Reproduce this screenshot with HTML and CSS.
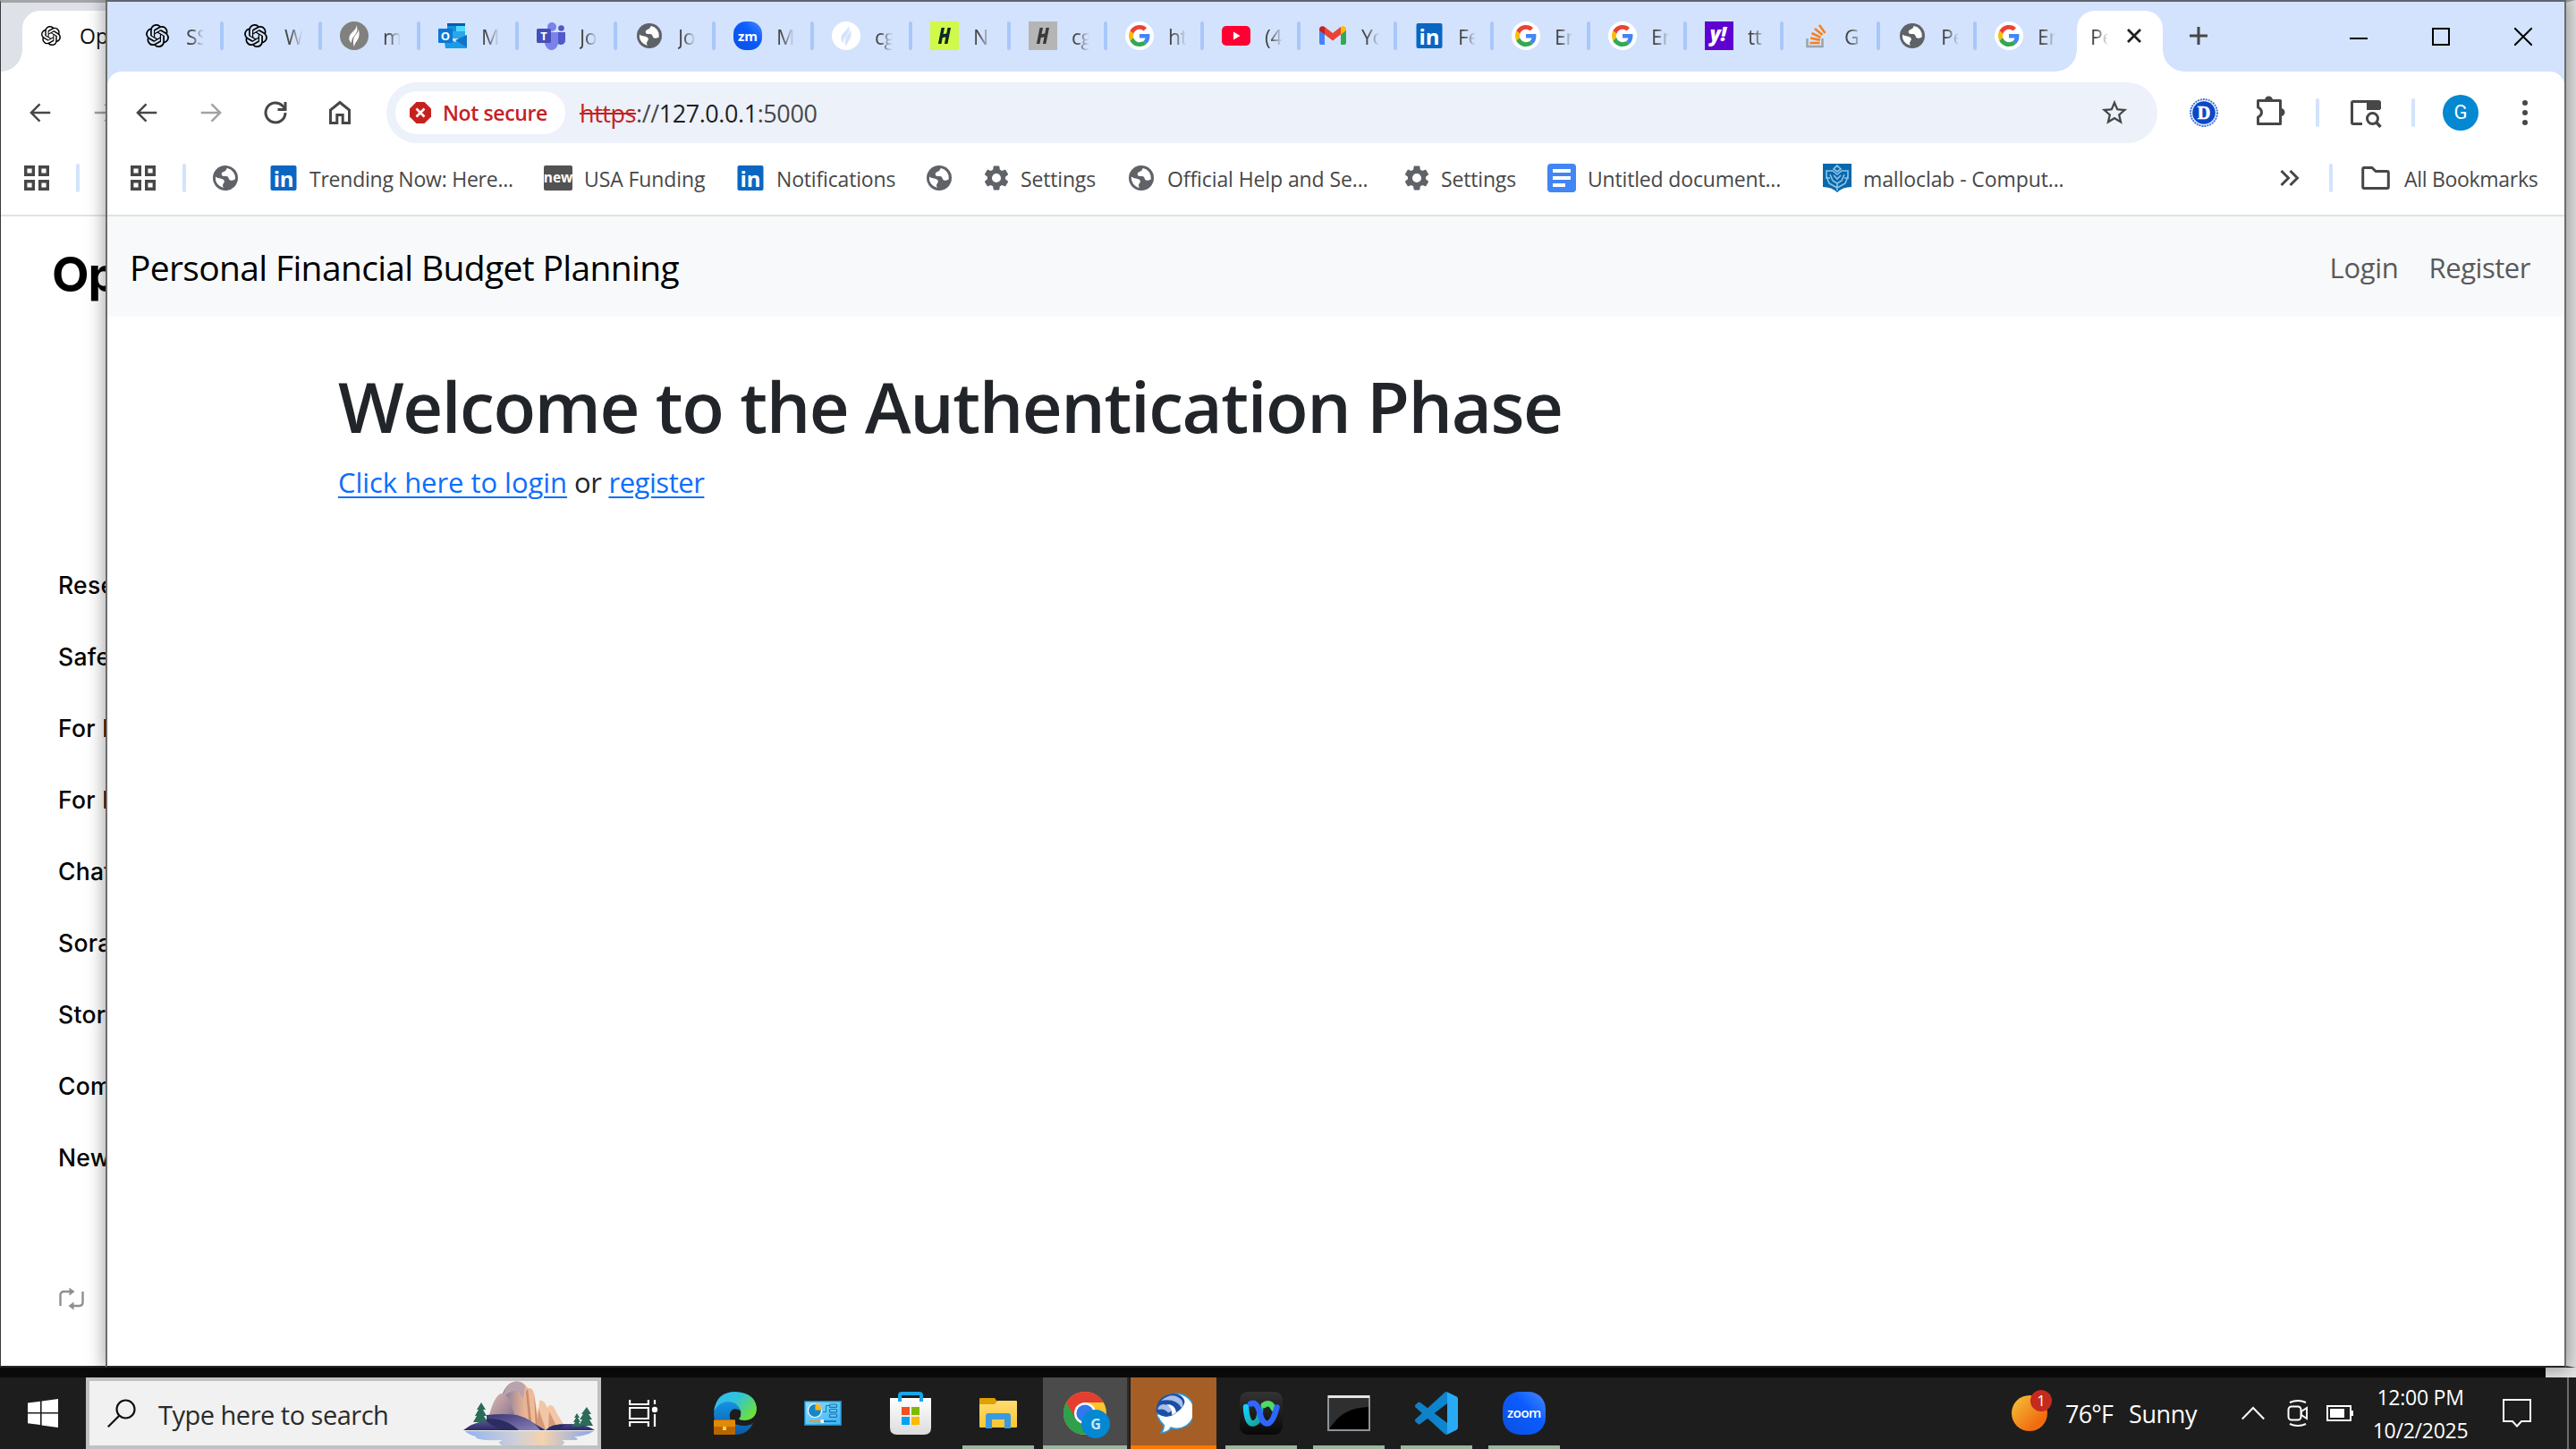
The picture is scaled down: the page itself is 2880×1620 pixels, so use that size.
FILE: index.html
```html
<!DOCTYPE html>
<html lang="en">
<head>
<meta charset="utf-8">
<title>Personal Financial Budget Planning</title>
<link rel="stylesheet" href="styles.css">
</head>
<body>
<svg class="defs" aria-hidden="true">
  <defs>
    <linearGradient id="gZoom" x1="0" y1="1" x2="1" y2="0"><stop offset="0" stop-color="#0b4fe0"/><stop offset=".6" stop-color="#0b5cff"/><stop offset="1" stop-color="#4a8bff"/></linearGradient>
    <linearGradient id="gEdge" x1="0" y1="0" x2="1" y2=".6"><stop offset="0" stop-color="#35b8f5"/><stop offset=".5" stop-color="#2fc3dc"/><stop offset="1" stop-color="#6be03c"/></linearGradient>
    <linearGradient id="gEdge2" x1="0" y1="0" x2="0" y2="1"><stop offset="0" stop-color="#1593e6"/><stop offset="1" stop-color="#0c59a4"/></linearGradient>
    <linearGradient id="gStore" x1="0" y1="0" x2="0" y2="1"><stop offset="0" stop-color="#fff"/><stop offset="1" stop-color="#dcdcdc"/></linearGradient>
    <linearGradient id="gFolder" x1="0" y1="0" x2="0" y2="1"><stop offset="0" stop-color="#ffdc73"/><stop offset="1" stop-color="#fcc42f"/></linearGradient>
    <linearGradient id="gPanel" x1="0" y1="0" x2="1" y2="1"><stop offset="0" stop-color="#8ddcff"/><stop offset="1" stop-color="#38b4f6"/></linearGradient>
    <linearGradient id="gWebex" x1="0" y1="0" x2="0" y2="1"><stop offset="0" stop-color="#333"/><stop offset="1" stop-color="#080808"/></linearGradient>
    <linearGradient id="gW1" x1="0" y1="0" x2="1" y2="1"><stop offset="0" stop-color="#12d0ff"/><stop offset="1" stop-color="#1aa08c"/></linearGradient>
    <linearGradient id="gCode" x1="0" y1="0" x2="1" y2="0"><stop offset="0" stop-color="#0f7fc6"/><stop offset=".74" stop-color="#0d86d0"/><stop offset=".75" stop-color="#29aaf5"/><stop offset="1" stop-color="#29aaf5"/></linearGradient>
    <linearGradient id="gSun" x1="0" y1="0" x2="1" y2="1"><stop offset="0" stop-color="#f4c63a"/><stop offset=".75" stop-color="#f06c10"/></linearGradient>
    <linearGradient id="gRock" x1="0" y1="0" x2="1" y2="0"><stop offset="0" stop-color="#857a98"/><stop offset=".35" stop-color="#8d7f9e"/><stop offset=".7" stop-color="#e8b394"/><stop offset="1" stop-color="#f5c39c"/></linearGradient>
    <linearGradient id="gRock2" x1="0" y1="0" x2="1" y2="1"><stop offset="0" stop-color="#dbbcae"/><stop offset=".5" stop-color="#a88c9b"/><stop offset="1" stop-color="#5c5884"/></linearGradient>
    <linearGradient id="gBase" x1="0" y1="0" x2="0" y2="1"><stop offset="0" stop-color="#6b64a4"/><stop offset="1" stop-color="#2c2b66"/></linearGradient>
    <linearGradient id="gPurple" x1="0" y1="0" x2="1" y2="1"><stop offset="0" stop-color="#38366f"/><stop offset=".45" stop-color="#5d5795"/><stop offset="1" stop-color="#8d83b8"/></linearGradient>
    <linearGradient id="gWater" x1="0" y1="0" x2="1" y2="0"><stop offset="0" stop-color="#8fb4f2"/><stop offset=".4" stop-color="#cfd0d8"/><stop offset=".6" stop-color="#f6d2ad"/><stop offset="1" stop-color="#7fa8f0"/></linearGradient>
  </defs>
</svg>
<svg class="symbols" aria-hidden="true">
  <symbol id="openai" viewBox="0 0 24 24"><path d="M22.2819 9.8211a5.9847 5.9847 0 0 0-.5157-4.9108 6.0462 6.0462 0 0 0-6.5098-2.9A6.0651 6.0651 0 0 0 4.9807 4.1818a5.9847 5.9847 0 0 0-3.9977 2.9 6.0462 6.0462 0 0 0 .7427 7.0966 5.98 5.98 0 0 0 .511 4.9107 6.051 6.051 0 0 0 6.5146 2.9001A5.9847 5.9847 0 0 0 13.2599 24a6.0557 6.0557 0 0 0 5.7718-4.2058 5.9894 5.9894 0 0 0 3.9977-2.9001 6.0557 6.0557 0 0 0-.7475-7.0729zm-9.022 12.6081a4.4755 4.4755 0 0 1-2.8764-1.0408l.1419-.0804 4.7783-2.7582a.7948.7948 0 0 0 .3927-.6813v-6.7369l2.02 1.1686a.071.071 0 0 1 .038.052v5.5826a4.504 4.504 0 0 1-4.4945 4.4944zm-9.6607-4.1254a4.4708 4.4708 0 0 1-.5346-3.0137l.142.0852 4.783 2.7582a.7712.7712 0 0 0 .7806 0l5.8428-3.3685v2.3324a.0804.0804 0 0 1-.0332.0615L9.74 19.9502a4.4992 4.4992 0 0 1-6.1408-1.6464zM2.3408 7.8956a4.485 4.485 0 0 1 2.3655-1.9728V11.6a.7664.7664 0 0 0 .3879.6765l5.8144 3.3543-2.0201 1.1685a.0757.0757 0 0 1-.071 0l-4.8303-2.7865A4.504 4.504 0 0 1 2.3408 7.872zm16.5963 3.8558L13.1038 8.364 15.1192 7.2a.0757.0757 0 0 1 .071 0l4.8303 2.7913a4.4944 4.4944 0 0 1-.6765 8.1042v-5.6772a.79.79 0 0 0-.407-.667zm2.0107-3.0231l-.142-.0852-4.7735-2.7818a.7759.7759 0 0 0-.7854 0L9.409 9.2297V6.8974a.0662.0662 0 0 1 .0284-.0615l4.8303-2.7866a4.4992 4.4992 0 0 1 6.6802 4.66zM8.3065 12.863l-2.02-1.1638a.0804.0804 0 0 1-.038-.0567V6.0742a4.4992 4.4992 0 0 1 7.3757-3.4537l-.142.0805L8.704 5.459a.7948.7948 0 0 0-.3927.6813zm1.0976-2.3654l2.602-1.4998 2.6069 1.4998v2.9994l-2.5974 1.4997-2.6067-1.4997Z"/></symbol>
  <symbol id="flame" viewBox="0 0 32 32"><path d="M18.500 4c1 5-6.500 8-8 13-.8 3 .5 5.500 2.500 7-.6-6 4.600-8 6-13 .6-2.500.5-5-.5-7zM20.500 8.500c.5 5-4 6-5.200 11-.6 3-.3 6.500.7 9 .4-5 4-6.500 5.200-11.500.7-3 .6-6-.7-8.500z"/></symbol>
  <symbol id="outlook" viewBox="0 0 32 32"><path fill="#0a5ba8" d="M10 2h20v4H10z"/><path fill="#1490df" d="M10 5h10v12H10z"/><path fill="#50d9ff" d="M20 5h10v7H20z"/><path fill="#28a8ea" d="M14 11h16v8H14z"/><path fill="#1a9be8" d="M6 16l13 7 13-8v15H8z"/><path fill="#0f74c8" d="M32 15v14L19 21z"/><rect x="0" y="8" width="16" height="16" rx="1" fill="#0a78d4"/><text x="8" y="20.500" text-anchor="middle" class="logo-bold" font-size="13" fill="#fff">O</text></symbol>
  <symbol id="teams" viewBox="0 0 32 32"><circle cx="17" cy="6" r="5" fill="#7b83eb"/><circle cx="27.500" cy="7.500" r="3.300" fill="#5059c9"/><path fill="#5059c9" d="M23 12h9v9a5 5 0 0 1-9 3z"/><path fill="#7b83eb" d="M9 12h15v10a7.500 9 0 0 1-15 2z"/><rect y="8" width="16" height="16" rx="1.500" fill="#464eb8"/><text x="8" y="20.500" text-anchor="middle" class="logo-bold" font-size="13" fill="#fff">T</text></symbol>
  <symbol id="globe" viewBox="0 0 32 32"><circle cx="16" cy="16" r="14" fill="#5f6368"/><path fill="#fff" d="M18 5c-1.500 1.500-1 3-3.500 3.800-2 .7-3.500 2-2.500 4 .8 1.600 3 1 5 1.200 2.500.2 2.500 2.500 3.500 4 1 1.300 3.500.8 6.300-.5A11.200 11.200 0 0 0 18 5z"/><path fill="#fff" d="M4.900 14.500c2.500 2.200 6 1.800 8.400 3 2 1 2 3 .6 4.500-1.400 1.500-1 3.300.1 5A11.200 11.200 0 0 1 4.900 14.500z"/></symbol>
  <symbol id="zm" viewBox="0 0 32 32"><rect width="32" height="32" rx="14" fill="url(#gZoom)"/><text x="16" y="21.500" text-anchor="middle" class="logo-bold" font-size="15" fill="#fff">zm</text></symbol>
  <symbol id="h" viewBox="0 0 32 32"><path d="M12.500 7h3.500l-3.600 18H8.900zM19.500 7H23l-3.600 18h-3.500zM11 15l9-2-1 4-9 2z"/></symbol>
  <symbol id="google" viewBox="0 0 48 48"><circle cx="24" cy="24" r="24" fill="#fff"/><g transform="translate(6 6) scale(.75)"><path fill="#EA4335" d="M24 9.500c3.540 0 6.710 1.220 9.210 3.600l6.850-6.850C35.900 2.380 30.470 0 24 0 14.620 0 6.510 5.380 2.560 13.220l7.980 6.190C12.430 13.720 17.740 9.500 24 9.500z"/><path fill="#4285F4" d="M46.980 24.550c0-1.570-.15-3.090-.38-4.550H24v9.020h12.940c-.58 2.960-2.260 5.480-4.780 7.180l7.730 6c4.510-4.180 7.090-10.360 7.090-17.650z"/><path fill="#FBBC05" d="M10.530 28.590c-.48-1.450-.76-2.990-.76-4.590s.27-3.140.76-4.590l-7.980-6.190C.92 16.460 0 20.120 0 24c0 3.880.92 7.540 2.560 10.780l7.970-6.190z"/><path fill="#34A853" d="M24 48c6.480 0 11.930-2.130 15.890-5.810l-7.730-6c-2.150 1.450-4.920 2.300-8.160 2.300-6.260 0-11.570-4.220-13.470-9.910l-7.980 6.190C6.510 42.620 14.620 48 24 48z"/></g></symbol>
  <symbol id="youtube" viewBox="0 0 32 32"><rect y="5" width="32" height="22" rx="5" fill="#f03"/><path fill="#fff" d="M13 11.500v9l7.500-4.500z"/></symbol>
  <symbol id="gmail" viewBox="0 0 32 32"><path fill="#4285f4" d="M1 7v17a2 2 0 0 0 2 2h4V14z"/><path fill="#34a853" d="M31 7v17a2 2 0 0 1-2 2h-4V14z"/><path fill="#ea4335" d="M7 6l9 7 9-7v8.500l-9 7-9-7z"/><path fill="#c5221f" d="M1 9c0-3 3-5 6-3v8.500L1 10z"/><path fill="#fbbc04" d="M31 9c0-3-3-5-6-3v8.500l6-4.500z"/></symbol>
  <symbol id="linkedin" viewBox="0 0 32 32"><rect x="1.500" y="2" width="29" height="28" rx="2" fill="#0a66c2"/><text x="16" y="25.500" text-anchor="middle" class="logo-bold" font-size="24" fill="#fff">in</text></symbol>
  <symbol id="yahoo" viewBox="0 0 32 32"><rect width="32" height="32" fill="#5f01d1"/><text x="15" y="22" text-anchor="middle" class="logo-black" font-size="22" fill="#fff">y!</text></symbol>
  <symbol id="stack" viewBox="0 0 32 32"><path fill="none" stroke="#9fa3a8" stroke-width="2.500" d="M6.500 19v9h17v-9"/><path fill="none" stroke="#f48024" stroke-width="2.600" d="M9.500 24h11M10 18.500l11 2.300M11.500 13l10 4.800M15 8l8.500 7M20 4l6.500 9"/></symbol>
  <symbol id="arrow" viewBox="0 0 24 24"><path d="M21 11H6.300l6-6L10.900 3.600 2.500 12l8.400 8.400 1.400-1.400-6-6H21z"/></symbol>
  <symbol id="apps" viewBox="0 0 30 30"><path fill="none" stroke="currentColor" stroke-width="3.400" d="M2.700 2.700h8.600v8.600H2.700zM18.700 2.700h8.600v8.600h-8.600zM2.700 18.700h8.600v8.600H2.700zM18.700 18.700h8.600v8.600h-8.600z"/></symbol>
  <symbol id="gear" viewBox="2 2 20 20"><path fill="#5f6368" d="M19.140 12.940c.04-.3.060-.61.060-.94 0-.32-.02-.64-.07-.94l2.030-1.580a.49.49 0 0 0 .12-.61l-1.920-3.320a.488.488 0 0 0-.59-.22l-2.390.96c-.5-.38-1.030-.7-1.620-.94l-.36-2.540a.484.484 0 0 0-.48-.41h-3.840c-.24 0-.43.17-.47.41l-.36 2.540c-.59.24-1.130.57-1.620.94l-2.390-.96c-.22-.08-.47 0-.59.22L2.740 8.870c-.12.21-.08.47.12.61l2.030 1.580c-.05.3-.09.63-.09.94s.02.64.07.94l-2.030 1.580a.49.49 0 0 0-.12.61l1.920 3.320c.12.22.37.29.59.22l2.390-.96c.5.38 1.030.7 1.620.94l.36 2.540c.05.24.24.41.48.41h3.840c.24 0 .44-.17.47-.41l.36-2.540c.59-.24 1.130-.56 1.620-.94l2.390.96c.22.08.47 0 .59-.22l1.920-3.320c.12-.22.07-.47-.12-.61l-2.010-1.580zM12 15.600A3.600 3.600 0 1 1 12 8.400a3.600 3.600 0 0 1 0 7.200z"/></symbol>
</svg>

<main class="desktop">
  <section class="window back-window">
    <div class="back-strip">
      <div class="back-tab"><svg class="i24"><use href="#openai"/></svg><span>Op</span></div>
    </div>
    <div class="back-tools">
      <svg class="i30 ink"><use href="#arrow"/></svg>
      <svg class="i30 ink flip dim"><use href="#arrow"/></svg>
    </div>
    <div class="back-marks"><svg class="i30 ink"><use href="#apps"/></svg><i class="rule"></i><svg class="i32"><use href="#globe"/></svg></div>
    <div class="back-page">
      <div class="back-logo">Op</div>
      <nav class="back-nav">
        <span>Rese</span><span>Safe</span><span>For B</span><span>For D</span><span>Chat</span><span>Sora</span><span>Stor</span><span>Com</span><span>New</span>
      </nav>
      <svg class="loop" viewBox="0 0 28 26"><path fill="none" stroke="#8f8f8f" stroke-width="2.400" d="M1.500 21V9q0-4 4-4h8M26.500 5v12q0 4-4 4h-8"/><path fill="#8f8f8f" d="M11.500 .5l6 4.500-6 4.500zM16.500 16.500L10.500 21l6 4.500z"/></svg>
    </div>
  </section>

  <section class="window front-window">
    <header class="strip">
      <div class="tab"><svg class="i26"><use href="#openai"/></svg><span>SS</span><i></i></div>
      <div class="tab"><svg class="i26"><use href="#openai"/></svg><span>W</span><i></i></div>
      <div class="tab"><svg class="i32 disc gray"><use href="#flame"/></svg><span>m</span><i></i></div>
      <div class="tab"><svg class="i32"><use href="#outlook"/></svg><span>M</span><i></i></div>
      <div class="tab"><svg class="i32"><use href="#teams"/></svg><span>Jo</span><i></i></div>
      <div class="tab"><svg class="i32"><use href="#globe"/></svg><span>Jo</span><i></i></div>
      <div class="tab"><svg class="i32"><use href="#zm"/></svg><span>M</span><i></i></div>
      <div class="tab"><svg class="i32 disc white"><use href="#flame"/></svg><span>cg</span><i></i></div>
      <div class="tab"><svg class="i32 lime"><use href="#h"/></svg><span>N</span><i></i></div>
      <div class="tab slim"><svg class="i32 silver"><use href="#h"/></svg><span>cg</span><i></i></div>
      <div class="tab slim"><svg class="i32"><use href="#google"/></svg><span>ht</span><i></i></div>
      <div class="tab slim"><svg class="i32"><use href="#youtube"/></svg><span>(4</span><i></i></div>
      <div class="tab slim"><svg class="i32"><use href="#gmail"/></svg><span>Yo</span><i></i></div>
      <div class="tab slim"><svg class="i32"><use href="#linkedin"/></svg><span>Fe</span><i></i></div>
      <div class="tab slim"><svg class="i32"><use href="#google"/></svg><span>En</span><i></i></div>
      <div class="tab slim"><svg class="i32"><use href="#google"/></svg><span>En</span><i></i></div>
      <div class="tab slim"><svg class="i32"><use href="#yahoo"/></svg><span>tt</span><i></i></div>
      <div class="tab slim"><svg class="i32"><use href="#stack"/></svg><span>G</span><i></i></div>
      <div class="tab slim"><svg class="i32"><use href="#globe"/></svg><span>Pe</span><i></i></div>
      <div class="tab slim"><svg class="i32"><use href="#google"/></svg><span>En</span></div>
      <div class="tab active"><span>Pe</span><svg class="close" viewBox="0 0 16 16"><path stroke="#1f1f1f" stroke-width="2.800" d="M1 1l14 14M15 1L1 15"/></svg></div>
      <svg class="plus" viewBox="0 0 20 20"><path stroke="#474747" stroke-width="3" d="M10 0v20M0 10h20"/></svg>
      <div class="controls">
        <svg viewBox="0 0 20 20"><path stroke="#000" stroke-width="2" d="M0 12h20"/></svg>
        <svg viewBox="0 0 20 20"><path fill="none" stroke="#000" stroke-width="2" d="M1 1h18v18H1z"/></svg>
        <svg viewBox="0 0 20 20"><path stroke="#000" stroke-width="2" d="M0 0l20 20M20 0L0 20"/></svg>
      </div>
    </header>

    <div class="tools">
      <svg class="i30 ink"><use href="#arrow"/></svg>
      <svg class="i30 ink flip dim"><use href="#arrow"/></svg>
      <svg class="i30" viewBox="0 0 30 30"><path fill="none" stroke="#474747" stroke-width="3" d="M26 15a11 11 0 1 1-3.200-7.800L26 10.500"/><path fill="none" stroke="#474747" stroke-width="3" d="M26 3v8.500h-8.500"/></svg>
      <svg class="i30" viewBox="0 0 30 30"><path fill="none" stroke="#474747" stroke-width="3" d="M4.500 12v14.500h7.300v-9h6.400v9h7.300V12L15 3.500z"/></svg>
      <div class="omnibox">
        <div class="chip">
          <svg viewBox="0 0 24 24"><path fill="#c5221f" d="M7.500 0h9L24 7.500v9L16.500 24h-9L0 16.500v-9z"/><path stroke="#fff" stroke-width="2.600" d="M7.500 7.500l9 9M16.500 7.500l-9 9"/></svg>
          <span>Not secure</span>
        </div>
        <div class="url"><s>https</s>://<b>127.0.0.1</b>:5000</div>
        <svg class="star" viewBox="0 0 24 24"><path fill="#474747" d="M22 9.240l-7.190-.62L12 2 9.190 8.630 2 9.240l5.460 4.730L5.820 21 12 17.270 18.180 21l-1.630-7.030L22 9.240zM12 15.400l-3.760 2.270 1-4.280-3.320-2.880 4.380-.38L12 6.100l1.710 4.040 4.380.38-3.320 2.880 1 4.280L12 15.400z"/></svg>
      </div>
      <svg class="ext-d" viewBox="0 0 32 32"><circle cx="16" cy="16" r="15" fill="#e8effc" stroke="#3b6fd8" stroke-width="1.800" stroke-dasharray="2 1"/><circle cx="16" cy="16" r="12.800" fill="#0b48c8"/><text x="16" y="22.500" text-anchor="middle" class="logo-serif" font-size="20" fill="#fff" stroke="#fff" stroke-width=".6">D</text></svg>
      <svg class="ext-puzzle" viewBox="0 0 34 34"><path fill="none" stroke="#474747" stroke-width="3" stroke-linejoin="round" d="M3.500 5.500h25v26h-25v-7.500q4-2 4-5.500t-4-5.500z"/><path fill="#474747" d="M11 5a4.500 4.500 0 0 1 9 0zM29 14a4.500 4.500 0 0 1 0 9z"/></svg>
      <i class="rule"></i>
      <svg class="lens" viewBox="0 0 36 32"><path fill="none" stroke="#474747" stroke-width="3" d="M14 27.500H4q-1.500 0-1.500-1.500V4Q2.500 2.500 4 2.500h28q1.500 0 1.500 1.500v7"/><path fill="#474747" d="M19 2h15v10H19z"/><circle cx="25.500" cy="21.500" r="6" fill="none" stroke="#474747" stroke-width="3"/><path stroke="#474747" stroke-width="3.400" d="M29.500 25.500l5 5.500"/></svg>
      <i class="rule"></i>
      <div class="avatar">G</div>
      <svg class="kebab" viewBox="0 0 6 28"><g fill="#474747"><circle cx="3" cy="3" r="3"/><circle cx="3" cy="14" r="3"/><circle cx="3" cy="25" r="3"/></g></svg>
    </div>

    <div class="marks">
      <div><svg class="i30 ink"><use href="#apps"/></svg></div>
      <i class="rule"></i>
      <div><svg class="i32"><use href="#globe"/></svg></div>
      <div class="tight"><svg class="i32"><use href="#linkedin"/></svg><span>Trending Now: Here...</span></div>
      <div><svg class="i32" viewBox="0 0 32 32"><rect y="2" width="32" height="28" rx="2" fill="#525252"/><text x="16" y="21" text-anchor="middle" class="logo-bold" font-size="15.500" fill="#fff">new</text></svg><span>USA Funding</span></div>
      <div class="snug"><svg class="i32"><use href="#linkedin"/></svg><span>Notifications</span></div>
      <div><svg class="i32"><use href="#globe"/></svg></div>
      <div class="snug"><svg class="i28"><use href="#gear"/></svg><span>Settings</span></div>
      <div><svg class="i32"><use href="#globe"/></svg><span>Official Help and Se...</span></div>
      <div class="snug"><svg class="i28"><use href="#gear"/></svg><span>Settings</span></div>
      <div class="snug"><svg class="i32" viewBox="0 0 32 32"><rect width="32" height="32" rx="4" fill="#4285f4"/><path fill="#fff" d="M6 6h20v4H6zM6 14h20v4H6zM6 22h14v4H6z"/></svg><span>Untitled document...</span></div>
      <div><svg class="i32" viewBox="0 0 32 32"><path fill="#0868ac" d="M0 0h32v26q-10 0-16 6-6-6-16-6z"/><g fill="none" stroke="#8fc3e6" stroke-width="1.600"><path d="M16 2l4 4-4 3-4-3zM4 8h7l5 4 5-4h7v6l-3 8-9 5-9-5-3-8zM8 12l3 7 5 3 5-3 3-7M12 13l4 4 4-4M16 22v8M3 16h5M24 16h5"/></g></svg><span>malloclab - Comput...</span></div>
      <div><svg class="more" viewBox="0 0 22 20"><path fill="none" stroke="#474747" stroke-width="3" d="M1.500 2l8 8-8 8M11.500 2l8 8-8 8"/></svg></div>
      <i class="rule"></i>
      <div class="all"><svg class="i32" viewBox="0 0 32 32"><path fill="none" stroke="#474747" stroke-width="3" stroke-linejoin="round" d="M1.700 26V6q0-1.500 1.500-1.500H12l4 4h12.800q1.500 0 1.500 1.500v16q0 1.500-1.500 1.500H3.200q-1.500 0-1.500-1.500z"/></svg><span>All Bookmarks</span></div>
    </div>

    <nav class="navbar">
      <a class="brand">Personal Financial Budget Planning</a>
      <a class="link login">Login</a>
      <a class="link">Register</a>
    </nav>
    <div class="content">
      <h1>Welcome to the Authentication Phase</h1>
      <p><a>Click here to login</a> <span>or</span> <a class="reg">register</a></p>
    </div>
  </section>
</main>

<footer class="taskbar">
  <div class="start"><svg viewBox="0 0 34 32"><path fill="#fff" d="M0 4.600L14 2.700V15H0zM15.600 2.400L34 0v15H15.600zM0 16.600h14V29L0 27.200zM15.600 16.600H34V32l-18.400-2.500z"/></svg></div>
  <div class="search">
    <svg class="glass" viewBox="0 0 32 32"><circle cx="20.500" cy="11.500" r="10" fill="none" stroke="#111" stroke-width="2.200"/><path stroke="#111" stroke-width="2.200" d="M13.500 18.500L.8 31.200"/></svg>
    <span>Type here to search</span>
    <svg class="scene" viewBox="0 0 148 72">
      <path fill="url(#gWater)" d="M2 56h144q-10 6-22 6 6 3 2 4h-16q6 2 0 6H44q-8-3 0-6-32 1-30-4-8-2-12-6z"/>
      <path fill="url(#gRock)" d="M26 54Q36 30 42 20 46 4 56 1q8-2 13 3l3 4q6-1 7 6l7 40z"/>
      <path fill="#c98a6c" d="M72 9l5 44h-3L70 12zM79 14l5 40h-3z"/>
      <path fill="#b9a3ae" d="M56 1q8-2 13 5l-2 14q-5-10-11-9t-12 8q3-16 12-18z"/>
      <path fill="#f2c7a6" d="M82 54l3-32q5-2 9 8l2-3q5-1 8 8l12 20z"/>
      <path fill="#d59a7c" d="M82 54l2-24 8 24zM95 54l1-20 10 20z"/>
      <path fill="url(#gRock2)" d="M28 42Q34 17 42 14q8 0 12 14l8 26H28z"/>
      <path fill="url(#gBase)" d="M0 55q10-8 22-10l22-6 28 4 20 12zM92 55q10-8 24-7 20-1 31 7z"/>
      <path fill="url(#gPurple)" d="M26 38q20-2 34 0 16 4 26 17H52Q40 44 26 46z"/>
      <path fill="#2a2c63" d="M28 42q20 0 34 13H44Q32 50 24 44zM92 55q8-8 22-6l-8 6z"/>
      <path fill="#2b6b58" d="M20 24l5 8h-3l4 7h-3l4 7h-8v2h-2v-2h-6l4-7h-2l4-7h-2zM138 29l5 8h-3l4 6h-3l4 7h-7v2h-2v-2h-7l4-7h-3l4-6h-2zM127 36l3 5h-2l3 5h-2l3 5h-10l3-5h-2l3-5h-2z"/>
    </svg>
  </div>
  <div class="app view"><svg viewBox="0 0 34 30" width="34" height="30"><path fill="none" stroke="#fff" stroke-width="2.200" d="M1.100 0v5h20.800V0M1.100 9h20.800v12H1.100zM1.100 30v-5h20.800v5M29 0v5M29 16v14"/><circle cx="29" cy="11" r="3.200" fill="#fff"/></svg></div>
  <div class="app"><svg class="i48" viewBox="0 0 48 48"><path fill="url(#gEdge2)" d="M0 24Q3 8 18 11q10 2 12 10-10-5-12 4-1 10 10 12 10 2 16-2-6 13-20 13Q0 46 0 24z"/><path fill="url(#gEdge)" d="M0 22Q3 0 24 0q22 1 24 18 0 13-13 14-8 0-7-3 4-4 1-10-3-7-13-8-10 0-16 11z"/><path fill="#1d1d1d" d="M20 22q4-5 8 0t0 8q1 5 16 6l-8 2q-14 0-17-7t1-9z"/><rect y="31" width="24" height="17" rx="1" fill="#b96600"/><path fill="#e08a0a" d="M0 32h24v7H0z"/><path fill="#ffd83a" d="M10 39h4v4h-4z"/></svg></div>
  <div class="app"><svg viewBox="0 0 42 28" width="42" height="28"><rect x=".7" y=".7" width="40.600" height="26.600" fill="url(#gPanel)" stroke="#1b7fb8" stroke-width="1.400"/><circle cx="12" cy="11" r="7.500" fill="#1587c9" stroke="#fff" stroke-width="1.200"/><path fill="#ffb31a" d="M12.500 10.500V3a8 8 0 0 1 7.500 7.500z"/><g fill="#62c6f5" stroke="#1878ad" stroke-width="1.200"><rect x="28.500" y="4" width="8" height="3.400" rx="1"/><rect x="28.500" y="9.500" width="8" height="3.400" rx="1"/><rect x="28.500" y="15" width="8" height="3.400" rx="1"/></g><path fill="none" stroke="#1878ad" d="M21 12.500h3.500V5.500h4"/><path stroke="#f59b14" stroke-width="2" d="M6 23h13"/><path stroke="#1577c4" stroke-width="2" d="M21 23h15"/><rect x="18.500" y="21" width="3.500" height="4" fill="#dff3fd"/></svg></div>
  <div class="app"><svg viewBox="0 0 46 48" width="46" height="48"><path fill="url(#gStore)" d="M0 7h46v33q0 8-8 8H8q-8 0-8-8z"/><path fill="none" stroke="#18a5ea" stroke-width="4" d="M11 11V4q0-2 2-2h20q2 0 2 2v7"/><path fill="#f25022" d="M13 17h9v9h-9z"/><path fill="#7fba00" d="M24 17h9v9h-9z"/><path fill="#00a4ef" d="M13 28h9v9h-9z"/><path fill="#ffb900" d="M24 28h9v9h-9z"/></svg></div>
  <div class="app open"><svg viewBox="0 0 42 36" width="42" height="36"><path fill="#e0a000" d="M0 2q0-1 1-1h16l3 4-3 4H0z"/><path fill="url(#gFolder)" d="M0 8h17l3-4h21q1 0 1 1v28q0 1-1 1H1q-1 0-1-1z"/><path fill="#3b99e0" d="M7 35V21q0-3 3-3h22q3 0 3 3v14h-7V25H14v10z"/></svg></div>
  <div class="app open chrome-app"><svg viewBox="0 0 56 56" width="56" height="56"><circle cx="24" cy="24" r="24" fill="#fbc52d"/><path fill="#2fa04c" d="M3.200 12A24 24 0 0 0 24 48l10.400-18z"/><path fill="#e43e30" d="M24 24L13.600 30 3.200 12A24 24 0 0 1 44.800 12H24z"/><circle cx="24" cy="24" r="12" fill="#fff"/><circle cx="24" cy="24" r="9.600" fill="#3079ea"/><circle cx="36" cy="36" r="16" fill="#0488d1"/><text x="36" y="41.500" text-anchor="middle" class="logo-bold" font-size="16" fill="#cfe6f5">G</text></svg><i></i></div>
  <div class="app orange"><svg viewBox="0 0 42 46" width="42" height="46"><path fill="#fff" stroke="#2b9be0" stroke-width="1.600" d="M21 1.500a19.500 19.500 0 1 1-3 37.500q-2 5-11 6 4-5 3-9A19.500 19.500 0 0 1 21 1.500z"/><path fill="#1a4fa8" d="M21 1Q34 2 34 14 30 27 18 27 6 28 1.500 21 2 3 21 1z"/><path fill="#a9bfe8" d="M7 9Q20-2 30 8q3 5 0 9Q24 6 7 9z"/><path fill="#fff" d="M34 9q5 17-10 23Q8 34 2.500 25q14 5 22-3 8-5 9.500-13z"/><path fill="#a9bfe8" d="M3.500 19q0-5 6-6 7 0 10 6-2 4-5 3-4-5-11-3z"/><path fill="#fff" d="M13 13q10 0 11 9-2 2-5 3 1-8-6-12z"/></svg></div>
  <div class="app open"><svg class="i48" viewBox="0 0 48 48"><rect width="48" height="48" rx="9" fill="url(#gWebex)"/><path fill="none" stroke="url(#gW1)" stroke-width="6.500" stroke-linecap="round" d="M7 17Q8 36 15 35.500T23 20"/><path fill="none" stroke="#4fdc64" stroke-width="6.500" stroke-linecap="round" d="M27 15q7-5 11 4"/><path fill="none" stroke="#2f66ff" stroke-width="6.500" stroke-linecap="round" d="M12 13.500q7-3 10 8.500 3 14 9 13.500T41.500 17.500"/></svg></div>
  <div class="app open"><svg viewBox="0 0 48 40" width="48" height="40"><rect x="1" y="1" width="46" height="38" fill="#000" stroke="#8d9399" stroke-width="2"/><path fill="#e6e6e6" d="M1 0h46v3H1z"/><path fill="#2f2f2f" d="M2 3h44v10Q20 14 8 30q-4 4-6 8z"/></svg></div>
  <div class="app open"><svg class="i48" viewBox="0 0 24 24"><path fill="url(#gCode)" d="M23.150 2.587L18.210.21a1.494 1.494 0 0 0-1.705.29l-9.460 8.630-4.120-3.128a.999.999 0 0 0-1.276.057L.327 7.261A1 1 0 0 0 .326 8.740L3.899 12 .326 15.260a1 1 0 0 0 .001 1.479L1.650 17.940a.999.999 0 0 0 1.276.057l4.120-3.128 9.460 8.630a1.492 1.492 0 0 0 1.704.29l4.942-2.377A1.500 1.500 0 0 0 24 20.060V3.939a1.500 1.500 0 0 0-.85-1.352zm-5.146 14.861L10.826 12l7.178-5.448v10.896z"/></svg></div>
  <div class="app open"><svg class="i48" viewBox="0 0 48 48"><rect width="48" height="48" rx="19" fill="url(#gZoom)"/><text x="24" y="28.500" text-anchor="middle" class="logo-zoom" font-size="15" fill="#fff">zoom</text></svg></div>
  <div class="tray">
    <svg class="sun" viewBox="0 0 46 46"><circle cx="20" cy="26" r="20" fill="url(#gSun)"/><circle cx="33" cy="12" r="12" fill="#c42b1c"/><text x="33" y="18" text-anchor="middle" class="logo-text" font-size="17" fill="#fff">1</text></svg>
    <span class="temp">76°F</span><span class="cond">Sunny</span>
    <svg class="chev" viewBox="0 0 26 16"><path fill="none" stroke="#fff" stroke-width="2" d="M.8 14.500L13 2l12.200 12.500"/></svg>
    <svg class="meet" viewBox="0 0 24 32"><path fill="none" stroke="#fff" stroke-width="2" d="M3 4q9-4 18 0M3 28q9 4 18 0"/><rect x="1.500" y="8.500" width="14" height="15" rx="3.500" fill="none" stroke="#fff" stroke-width="2"/><path fill="none" stroke="#fff" stroke-width="2" d="M16 14l6-4v12l-6-4z"/></svg>
    <svg class="batt" viewBox="0 0 30 18"><path fill="none" stroke="#fff" stroke-width="2" d="M1 1h26v16H1z"/><path fill="#fff" d="M4 4h16v10H4zM28 6h2v6h-2z"/></svg>
    <div class="clock"><span>12:00 PM</span><span>10/2/2025</span></div>
    <svg class="note" viewBox="0 0 32 32"><path fill="none" stroke="#fff" stroke-width="2" d="M1 1h30v24H21l-5 5.500L11 25H1z"/></svg>
    <i class="peek"></i>
  </div>
</footer>
</body>
</html>
```
FILE: styles.css
```css
* { box-sizing: border-box; }

body {
  margin: 0;
  width: 2880px;
  height: 1620px;
  overflow: hidden;
  display: grid;
  grid-template-rows: 1540px 80px;
  background: #0a0a0a;
  font-family: "Open Sans", "Noto Sans", sans-serif;
  color: #474747;
}

svg { display: block; flex: none; }
.defs { position: absolute; width: 0; height: 0; }
.symbols { display: none; }
.i24 { width: 22px; height: 22px; }
.i26 { width: 26px; height: 26px; margin: 0 3px; }
.i28 { width: 28px; height: 28px; }
.i30 { width: 30px; height: 30px; }
.i32 { width: 32px; height: 32px; }
.i48 { width: 48px; height: 48px; }
.ink { fill: #474747; color: #474747; }
.flip { transform: scaleX(-1); }
.dim { opacity: .5; }
.disc { border-radius: 50%; }
.gray { background: #80807e; fill: #fff; }
.white { background: #fff; fill: #d3e2fd; }
.lime { background: #d0f94a; fill: #0c2a22; }
.silver { background: #b5b5b5; fill: #3a3a3a; }
.rule { flex: none; width: 4px; height: 32px; border-radius: 2px; background: #d3e3fd; }
.logo-bold { font-family: "Open Sans", sans-serif; font-weight: 700; }
.logo-black { font-family: "Open Sans", sans-serif; font-weight: 800; font-style: italic; }
.logo-serif { font-family: "Liberation Serif", serif; font-weight: 700; }
.logo-text { font-family: "Open Sans", sans-serif; }
.logo-zoom { font-family: "Open Sans", sans-serif; font-weight: 600; letter-spacing: -.5px; }

/* desktop and windows */
.desktop { position: relative; overflow: hidden; background: linear-gradient(90deg, #0a0a0a 2846px, #e3e3e3 2846px); }
.window { position: absolute; overflow: hidden; }

.back-window {
  left: 0;
  top: 0;
  width: 2880px;
  height: 1529px;
  background: #fff;
  border-left: 1px solid #3a3a3c;
  border-top: 3px solid #a3a5a8;
  border-bottom: 2px solid #252525;
  border-right: 12px solid #e1e1e1;
  color: #0d0d0d;
}
.back-strip { height: 77px; padding: 9px 0 0 24px; background: #dee1e8; position: relative; }
.back-tab {
  height: 68px;
  width: 400px;
  padding: 0 0 12px 21px;
  display: flex;
  align-items: center;
  gap: 21px;
  background: #fff;
  border-radius: 20px 0 0 0;
  font-size: 23px;
}
.back-strip::before {
  content: "";
  position: absolute;
  left: 0;
  bottom: 0;
  width: 24px;
  height: 24px;
  background: radial-gradient(circle at 0 0, #dee1e8 23.5px, #fff 24px);
}
.back-tools { height: 92px; display: flex; align-items: center; padding-left: 29px; gap: 42px; }
.back-marks { height: 70px; display: flex; align-items: center; gap: 29px; padding: 0 0 14px 25px; border-bottom: 2px solid #e1e4e1; }
.back-marks .rule { margin-right: -2px; }
.back-page { padding: 0 0 0 57px; font-family: Inter, sans-serif; color: #000; }
.back-logo { height: 128px; display: flex; align-items: center; font-size: 54px; font-weight: 700; letter-spacing: -1px; }
.back-nav { margin-top: 244px; display: grid; grid-auto-rows: 80px; align-items: center; padding-left: 7px; font-size: 26.500px; font-weight: 500; letter-spacing: .3px; white-space: nowrap; }
.loop { width: 28px; height: 26px; margin: 105px 0 0 8px; }

.front-window {
  left: 118px;
  top: 0;
  width: 2751px;
  height: 1529px;
  background: linear-gradient(#d3e3fd 120px, #fff 120px);
  border: 2px solid #6c6c6e;
  border-top-color: #61646f;
  border-bottom-color: #252525;
  box-shadow: 0 0 18px 2px rgba(0, 0, 0, .35);
}

/* tab strip */
.strip { height: 78px; display: flex; background: #d3e3fd; padding-left: 20px; }
.tab { width: 110px; display: flex; align-items: center; padding: 0 0 2px 20px; font-size: 23px; }
.tab.slim { width: 108px; }
.tab span { width: 20px; margin: 2px 0 0 16px; overflow: hidden; -webkit-mask-image: linear-gradient(90deg, #000 30%, transparent); mask-image: linear-gradient(90deg, #000 30%, transparent); white-space: nowrap; letter-spacing: -.4px; }
.tab i { width: 4px; height: 32px; margin-left: auto; border-radius: 2px; background: #a8c7fa; }
.tab.active { position: relative; width: 96px; height: 68px; margin: 10px 0 0 4px; padding: 0 0 12px 15px; background: #fff; border-radius: 20px 20px 0 0; }
.tab.active span { width: 20px; margin: 2px 0 0; }
.tab.active::before, .tab.active::after { content: ""; position: absolute; bottom: 0; width: 24px; height: 24px; }
.tab.active::before { left: -24px; background: radial-gradient(circle at 0 0, transparent 23.5px, #fff 24px); }
.tab.active::after { right: -24px; background: radial-gradient(circle at 100% 0, transparent 23.5px, #fff 24px); }
.close { width: 16px; height: 16px; margin-left: 21px; }
.plus { width: 20px; height: 20px; margin: 28px 0 0 30px; }
.controls { margin: 29px 0 0 auto; padding-right: 36px; display: flex; gap: 72px; }
.controls svg { width: 20px; height: 20px; }

/* toolbar */
.tools { height: 92px; display: flex; align-items: center; padding-left: 29px; background: #fff; border-radius: 16px 16px 0 0; }
.tools > .i30 { margin-right: 42px; }
.tools > .i30 + .i30 + .i30 + .i30 { margin-right: 37px; }
.omnibox { width: 1980px; height: 68px; padding: 0 31px 0 10px; display: flex; align-items: center; border-radius: 34px; background: #ecf1fa; }
.chip { width: 190px; height: 48px; padding-left: 16px; display: flex; align-items: center; gap: 13px; border-radius: 24px; background: #fff; color: #c5221f; font-size: 23px; font-weight: 600; letter-spacing: -.4px; white-space: nowrap; }
.chip svg { width: 24px; height: 24px; }
.url { margin: 0 auto 0 16px; font-size: 27px; letter-spacing: -.43px; color: #474747; white-space: nowrap; }
.url s { color: #c5221f; }
.url b { font-weight: 400; color: #1f1f1f; }
.star { width: 34px; height: 34px; }
.ext-d { width: 32px; height: 32px; margin-left: 36px; }
.ext-puzzle { width: 34px; height: 34px; margin: -4px 34px 0 41px; }
.lens { width: 36px; height: 32px; margin: 2px 33px 0 34px; }
.avatar { width: 40px; height: 40px; margin: 0 49px 0 31px; border-radius: 50%; background: #0488d1; color: #fff; font: 22px/40px Roboto, sans-serif; text-align: center; }
.kebab { width: 6px; height: 28px; }

/* bookmarks */
.marks {
  height: 70px;
  padding: 0 0 14px 25px;
  display: grid;
  grid-template-columns: 59px 32px 65px 307px 215px 211px 66px 160px 310px 160px 308px 511px 55px 36px auto;
  align-items: center;
  background: #fff;
  border-bottom: 2px solid #dfe3df;
  font-size: 23px;
  letter-spacing: -.1px;
}
.marks div { display: flex; align-items: center; gap: 13px; white-space: nowrap; }
.marks span { padding-top: 1px; }
.marks .tight { letter-spacing: -.24px; }
.marks .snug { letter-spacing: -.17px; }
.marks .all { letter-spacing: -.3px; gap: 16px; }
.more { width: 22px; height: 20px; }

/* page */
.navbar { height: 112px; padding: 1px 38px 0 25px; display: flex; align-items: center; background: #f8f9fa; }
.brand { margin-right: auto; font-size: 39px; letter-spacing: -.66px; color: #000; white-space: nowrap; }
.link { margin-left: 34px; font-size: 31px; letter-spacing: -.45px; color: #595a5b; }
.link.login { letter-spacing: -.3px; }
.content { padding: 52px 258px; color: #212529; }
h1 { margin: 0; font-size: 78px; line-height: 96px; font-weight: 600; letter-spacing: -1.44px; white-space: nowrap; }
p { margin: 13px 0 0; font-size: 31px; line-height: 48px; letter-spacing: -.04px; }
p span { letter-spacing: -.5px; }
p .reg { letter-spacing: -.46px; }
p a { color: #0d6efd; text-decoration: underline; text-decoration-thickness: 2px; text-underline-offset: 4px; }

/* taskbar */
.taskbar { display: flex; background: #1d1d1d; color: #fff; }
.start { width: 96px; padding-left: 31px; display: flex; align-items: center; }
.start svg { width: 34px; height: 32px; }
.search { width: 576px; border: 4px solid #c1c1c1; background: #f1f1f1; display: flex; align-items: center; padding-left: 20px; color: #2b2b2b; font-size: 29px; letter-spacing: -.5px; white-space: nowrap; }
.search span { padding-top: 2px; }
.glass { width: 32px; height: 32px; margin-right: 25px; }
.scene { width: 148px; height: 72px; margin-left: auto; margin-right: 2px; }
.app { position: relative; width: 98px; display: flex; align-items: center; justify-content: center; }
.app.view { width: 101px; padding-right: 5px; }
.app.open { background: linear-gradient(#9fb4a0, #9fb4a0) 50% 100% / 80px 4px no-repeat; }
.app.chrome-app { width: 96px; margin: 0 1px; background: linear-gradient(#9fb4a0, #9fb4a0) 0 100% / 96px 4px no-repeat, #4b4b4b; padding: 8px 0 0 2px; }
.chrome-app i { width: 2px; background: #2c2c2c; align-self: stretch; margin: -8px -20px 0 15px; }
.app.orange { width: 96px; margin: 0 1px; background: linear-gradient(#ff7800, #ff7800) 0 100% / 96px 4px no-repeat, #a55e26; }
.tray { flex: 1; display: flex; align-items: center; font-size: 27px; white-space: nowrap; }
.sun { width: 46px; height: 46px; margin: -6px 14px 0 496px; }
.temp { width: 71px; letter-spacing: -.8px; padding-top: 1px; }
.cond { width: 126px; letter-spacing: -.4px; padding-top: 1px; }
.chev { width: 26px; height: 16px; }
.meet { width: 24px; height: 32px; margin: 0 20px 0 25px; }
.batt { width: 30px; height: 18px; }
.clock { width: 120px; margin-left: 15px; padding-top: 1px; display: grid; justify-items: center; font-size: 23px; line-height: 37px; letter-spacing: -.25px; }
.note { width: 32px; height: 32px; margin-left: 32px; }
.peek { width: 2px; height: 80px; margin-left: auto; margin-right: 8px; background: #6d6d6d; }
```
